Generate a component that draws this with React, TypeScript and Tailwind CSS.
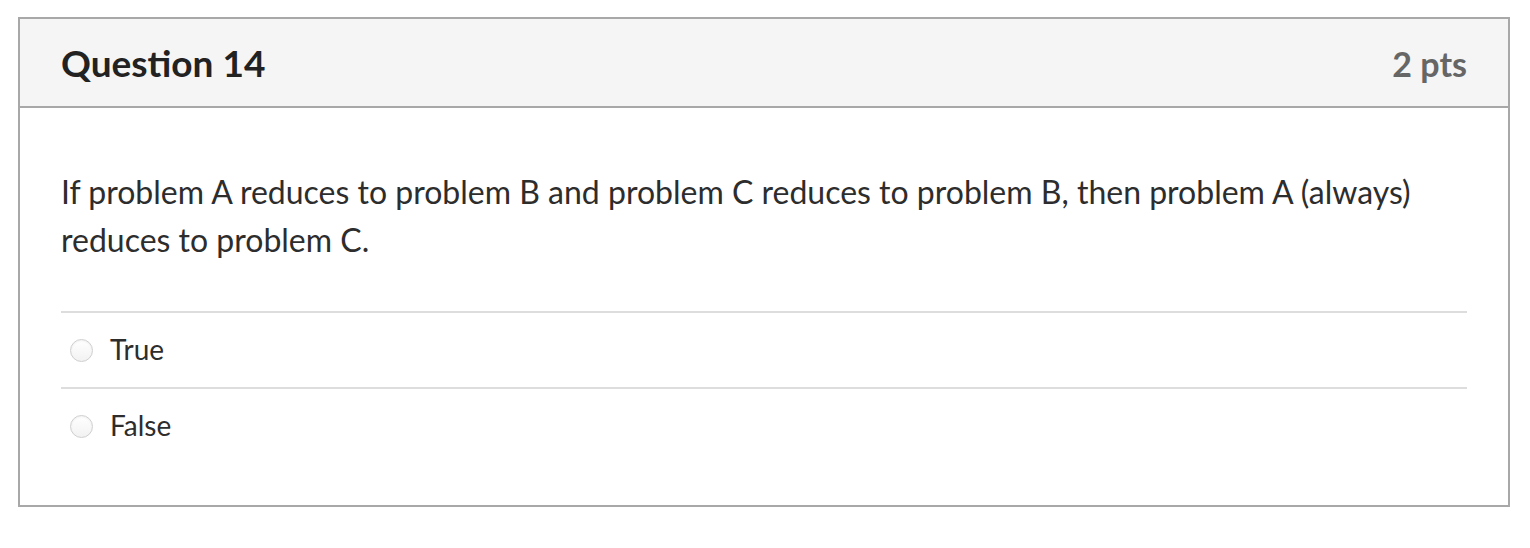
import React from "react";

function Radio() {
  return (
    <span className="inline-block w-[23px] h-[23px] rounded-full border border-[#cfcfcf] bg-gradient-to-b from-[#ffffff] to-[#f2f2f2] shadow-[inset_0_1px_2px_rgba(0,0,0,0.06)] shrink-0" />
  );
}

export default function App() {
  return (
    <div className="w-[1530px] h-[548px] bg-white pt-[17px] pl-[18px]" style={{ fontFamily: "Lato, 'Open Sans', sans-serif" }}>
      <div className="w-[1492px] border-2 border-[#a8a8a8]">
        <div className="h-[89px] bg-[#f5f5f5] border-b-2 border-[#a8a8a8] flex items-center justify-between pl-[41px] pr-[41px]">
          <div className="text-[37px] font-bold leading-none text-[#222222]">Question 14</div>
          <div className="text-[34px] font-bold text-[#666666] leading-none pt-[3px]">2 pts</div>
        </div>
        <div className="pl-[41px] pr-[41px] pt-[60px] pb-[42px]">
          <p className="text-[32px] leading-[48px] text-[#2d2d2d]">
            If problem A reduces to problem B and problem C reduces to problem B, then problem A (always) reduces to problem C.
          </p>
          <div className="mt-[47px]">
            <div className="h-[76px] border-t-2 border-[#dddddd] flex items-center gap-[17px] pl-[9px]">
              <Radio />
              <span className="text-[28px] leading-none pb-[3px] text-[#2d2d2d]">True</span>
            </div>
            <div className="h-[76px] border-t-2 border-[#dddddd] flex items-center gap-[17px] pl-[9px]">
              <Radio />
              <span className="text-[28px] leading-none pb-[3px] text-[#2d2d2d]">False</span>
            </div>
          </div>
        </div>
      </div>
    </div>
  );
}
